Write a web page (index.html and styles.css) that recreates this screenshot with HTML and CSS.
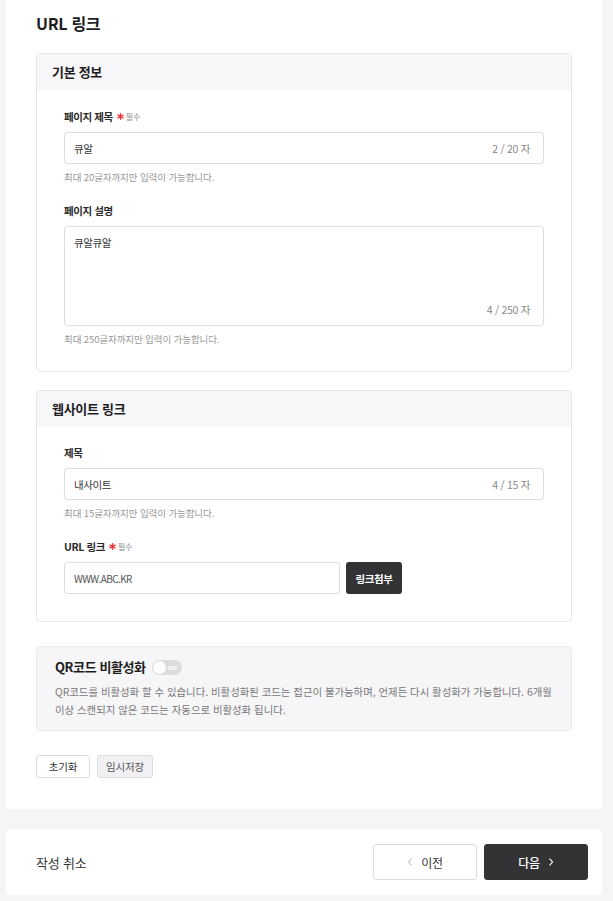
FILE: index.html
```html
<!DOCTYPE html>
<html lang="ko">
<head>
<meta charset="utf-8">
<title>URL 링크</title>
<link rel="stylesheet" href="styles.css">
</head>
<body>
<div class="page">
  <main class="panel">
    <h1 class="title">URL 링크</h1>

    <section class="card">
      <h2 class="card-head">기본 정보</h2>
      <div class="card-body">
        <div class="field">
          <label class="label">페이지 제목
            <svg class="req" viewBox="0 0 8 8" width="8" height="8"><g stroke="#f2333a" stroke-width="1.6" stroke-linecap="round"><line x1="4" y1="0.8" x2="4" y2="7.2"/><line x1="1.2" y1="2.4" x2="6.8" y2="5.6"/><line x1="1.2" y1="5.6" x2="6.8" y2="2.4"/></g></svg><span class="req-text">필수</span>
          </label>
          <div class="input-box"><input class="input" type="text" value="큐알"><span class="count">2 / 20 자</span></div>
          <p class="help">최대 20글자까지만 입력이 가능합니다.</p>
        </div>
        <div class="field">
          <label class="label">페이지 설명</label>
          <div class="input-box area-box"><textarea class="area">큐알큐알</textarea><span class="count">4 / 250 자</span></div>
          <p class="help">최대 250글자까지만 입력이 가능합니다.</p>
        </div>
      </div>
    </section>

    <section class="card card-2">
      <h2 class="card-head">웹사이트 링크</h2>
      <div class="card-body">
        <div class="field">
          <label class="label">제목</label>
          <div class="input-box"><input class="input" type="text" value="내사이트"><span class="count">4 / 15 자</span></div>
          <p class="help">최대 15글자까지만 입력이 가능합니다.</p>
        </div>
        <div class="field">
          <label class="label">URL 링크
            <svg class="req" viewBox="0 0 8 8" width="8" height="8"><g stroke="#f2333a" stroke-width="1.6" stroke-linecap="round"><line x1="4" y1="0.8" x2="4" y2="7.2"/><line x1="1.2" y1="2.4" x2="6.8" y2="5.6"/><line x1="1.2" y1="5.6" x2="6.8" y2="2.4"/></g></svg><span class="req-text">필수</span>
          </label>
          <div class="url-row">
            <div class="input-box url-box"><input class="input url-input" type="text" value="WWW.ABC.KR"></div>
            <button class="btn-attach" type="button">링크첨부</button>
          </div>
        </div>
      </div>
    </section>

    <section class="qr-card">
      <div class="qr-head">
        <h3 class="qr-title">QR코드 비활성화</h3>
        <span class="toggle"><span class="knob"></span><span class="toggle-text">OFF</span></span>
      </div>
      <p class="qr-desc">QR코드를 비활성화 할 수 있습니다. 비활성화된 코드는 접근이 불가능하며, 언제든 다시 활성화가 가능합니다. 6개월 이상 스캔되지 않은 코드는 자동으로 비활성화 됩니다.</p>
    </section>

    <div class="actions">
      <button class="btn-sm btn-reset" type="button">초기화</button>
      <button class="btn-sm btn-gray" type="button">임시저장</button>
    </div>
  </main>

  <footer class="bottom-bar">
    <span class="cancel">작성 취소</span>
    <div class="nav">
      <button class="btn-nav btn-prev" type="button">
        <svg viewBox="0 0 8 12" width="6" height="10"><polyline points="6,1.5 2,6 6,10.5" fill="none" stroke="#aaa" stroke-width="1.3"/></svg>
        <span>이전</span>
      </button>
      <button class="btn-nav btn-next" type="button">
        <span>다음</span>
        <svg viewBox="0 0 8 12" width="6" height="10"><polyline points="2,1.5 6,6 2,10.5" fill="none" stroke="#fff" stroke-width="1.5"/></svg>
      </button>
    </div>
  </footer>
</div>
</body>
</html>
```

FILE: styles.css
```css
* { box-sizing: border-box; }

html, body {
  margin: 0;
  padding: 0;
  background: #f5f5f7;
  font-family: "Noto Sans CJK KR", "Noto Sans", "Liberation Sans", sans-serif;
  color: #222;
}

.page {
  padding: 0 11px 0 6px;
  display: flex;
  flex-direction: column;
}

.panel {
  background: #fff;
  border-radius: 0 0 4px 4px;
  padding: 13px 30px 31px;
  display: flex;
  flex-direction: column;
}

.title {
  margin: 0;
  font-size: 16px;
  line-height: 20px;
  font-weight: 700;
  letter-spacing: -0.3px;
  color: #1d1d1f;
}

.card {
  margin-top: 20px;
  border: 1px solid #e6e6e9;
  border-radius: 4px;
  overflow: hidden;
}

.card-2 { margin-top: 18px; }

.card-head {
  margin: 0;
  height: 36px;
  line-height: 36px;
  padding-left: 15px;
  background: #f7f7f9;
  font-size: 13px;
  font-weight: 700;
  letter-spacing: -0.3px;
  color: #1d1d1f;
}

.card-body {
  padding: 18px 27px 25px;
  display: flex;
  flex-direction: column;
  gap: 18px;
}

.card-2 .card-body { padding-top: 17px; padding-bottom: 27px; }

.field {
  display: flex;
  flex-direction: column;
}

.label {
  display: flex;
  align-items: center;
  height: 16px;
  margin-bottom: 8px;
  font-size: 10.5px;
  font-weight: 700;
  letter-spacing: -0.4px;
  color: #2a2a2a;
}

.req {
  margin-left: 4px;
  width: 7px;
  height: 7px;
}

.req-text {
  margin-left: 2px;
  font-size: 8px;
  font-weight: 400;
  color: #888;
  letter-spacing: -0.3px;
}

.input-box {
  display: flex;
  align-items: center;
  height: 32px;
  border: 1px solid #dedee2;
  border-radius: 3px;
  padding: 0 13px 0 9px;
  background: #fff;
}

.input {
  flex: 1;
  min-width: 0;
  border: 0;
  outline: 0;
  padding: 0;
  margin: 0;
  background: transparent;
  font-family: inherit;
  font-size: 10.5px;
  letter-spacing: -0.4px;
  color: #333;
}

.count {
  font-size: 10.5px;
  color: #888;
  letter-spacing: -0.3px;
  white-space: nowrap;
}

.area-box {
  height: 100px;
  flex-direction: column;
  align-items: stretch;
  padding: 8px 13px 7px 9px;
}

.area {
  flex: 1;
  border: 0;
  outline: 0;
  padding: 0;
  margin: 0;
  resize: none;
  background: transparent;
  font-family: inherit;
  font-size: 10.5px;
  line-height: 16px;
  letter-spacing: -0.4px;
  color: #333;
}

.area-box .count {
  align-self: flex-end;
  line-height: 16px;
}

.help {
  margin: 6px 0 0;
  font-size: 9.5px;
  line-height: 14px;
  color: #999;
  letter-spacing: -0.1px;
}

.url-row {
  display: flex;
  gap: 6px;
}

.url-box {
  width: 276px;
}

.url-input {
  font-size: 10px;
  color: #555;
  letter-spacing: -0.6px;
}

.btn-attach {
  width: 56px;
  height: 32px;
  border: 0;
  border-radius: 3px;
  background: #333335;
  color: #fff;
  font-family: inherit;
  font-size: 10.5px;
  font-weight: 700;
  letter-spacing: -0.4px;
  padding: 0;
}

.qr-card {
  margin-top: 24px;
  background: #f6f6f8;
  border: 1px solid #ebebee;
  border-radius: 4px;
  padding: 11px 18px 11px;
}

.qr-head {
  display: flex;
  align-items: center;
  gap: 6px;
}

.qr-title {
  margin: 0;
  font-size: 13px;
  line-height: 18px;
  font-weight: 700;
  letter-spacing: -0.4px;
  color: #1d1d1f;
}

.toggle {
  display: flex;
  align-items: center;
  width: 30px;
  height: 15px;
  border-radius: 8px;
  background: #dcdcde;
  padding: 0 1px;
}

.knob {
  width: 13px;
  height: 13px;
  border-radius: 50%;
  background: #fff;
}

.toggle-text {
  margin-left: 2px;
  font-size: 5px;
  font-weight: 700;
  color: #fff;
  line-height: 1;
}

.qr-desc {
  margin: 7px 0 0;
  font-size: 10.4px;
  line-height: 18px;
  letter-spacing: 0;
  color: #777;
}

.actions {
  margin-top: 24px;
  display: flex;
  gap: 7px;
}

.btn-sm {
  height: 23px;
  border: 1px solid #dcdcdf;
  border-radius: 3px;
  background: #fff;
  font-family: inherit;
  font-size: 10.5px;
  letter-spacing: -0.2px;
  color: #333;
  padding: 0;
}

.btn-reset {
  width: 54px;
}

.btn-gray {
  width: 56px;
  background: #f1f1f3;
  color: #555;
}

.bottom-bar {
  margin-top: 20px;
  height: 66px;
  background: #fff;
  border-radius: 4px;
  padding: 0 14px 0 30px;
  display: flex;
  align-items: center;
  justify-content: space-between;
}

.cancel {
  font-size: 13px;
  letter-spacing: -0.2px;
  color: #333;
}

.nav {
  display: flex;
  gap: 7px;
}

.btn-nav {
  width: 104px;
  height: 36px;
  border-radius: 3px;
  display: flex;
  align-items: center;
  justify-content: center;
  gap: 8px;
  font-family: inherit;
  font-size: 12px;
  letter-spacing: -0.3px;
  padding: 0;
}

.btn-prev {
  background: #fff;
  border: 1px solid #dcdcdf;
  color: #333;
}

.btn-next {
  background: #333335;
  border: 1px solid #333335;
  color: #fff;
  font-weight: 500;
}
```
